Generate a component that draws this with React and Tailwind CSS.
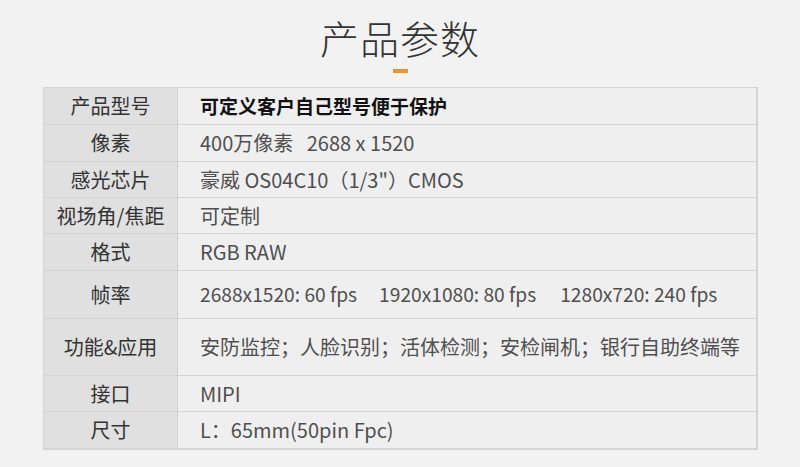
const rows = [
  { label: '产品型号', value: '可定义客户自己型号便于保护', h: 'h-[36px]', bold: true },
  { label: '像素', value: '400万像素   2688 x 1520', h: 'h-[37px]' },
  { label: '感光芯片', value: '豪威 OS04C10（1/3"）CMOS', h: 'h-[36px]' },
  { label: '视场角/焦距', value: '可定制', h: 'h-[36px]' },
  { label: '格式', value: 'RGB RAW', h: 'h-[37px]' },
  {
    label: '帧率',
    value: (
      <span className="flex text-[19.2px]">
        <span>2688x1520: 60 fps</span>
        <span className="ml-[22px]">1920x1080: 80 fps</span>
        <span className="ml-[24px]">1280x720: 240 fps</span>
      </span>
    ),
    h: 'h-[48px]',
  },
  { label: '功能&应用', value: '安防监控；人脸识别；活体检测；安检闸机；银行自助终端等', h: 'h-[57px]' },
  { label: '接口', value: 'MIPI', h: 'h-[36px]' },
  { label: '尺寸', value: 'L：65mm(50pin Fpc)', h: 'h-[37px]' },
]

export default function App() {
  return (
    <div
      className="w-[800px] h-[467px] bg-[#f2f2f2] overflow-hidden"
      style={{ fontFamily: '"Noto Sans CJK SC", "Noto Sans", sans-serif' }}
    >
      {/* Title */}
      <div className="flex flex-col items-center pt-[11px]">
        <h1 className="text-[39px] leading-[52px] font-light text-[#333] tracking-[1px]">产品参数</h1>
        <div className="mt-[6px] w-[15px] h-[4px] bg-[#f39324]" />
      </div>

      {/* Table */}
      <div className="mt-[14px] ml-[43px] w-[715px] border border-[#d4d4d4] border-b-2 border-r-2">
        {rows.map((r, i) => (
          <div
            key={i}
            className={`flex ${r.h} ${i > 0 ? 'border-t border-[#d4d4d4]' : ''}`}
          >
            <div className="w-[134px] shrink-0 bg-[#e0e0e0] border-r border-[#d0d0d0] flex items-center justify-center text-[20px] text-[#333]">
              {r.label}
            </div>
            <div
              className={`flex-1 bg-[#efefef] flex items-center pl-[22px] whitespace-pre ${
                r.bold ? 'font-bold text-[19px] text-[#111]' : 'text-[20px] text-[#4f4f4f]'
              }`}
            >
              {r.value}
            </div>
          </div>
        ))}
      </div>
    </div>
  )
}
